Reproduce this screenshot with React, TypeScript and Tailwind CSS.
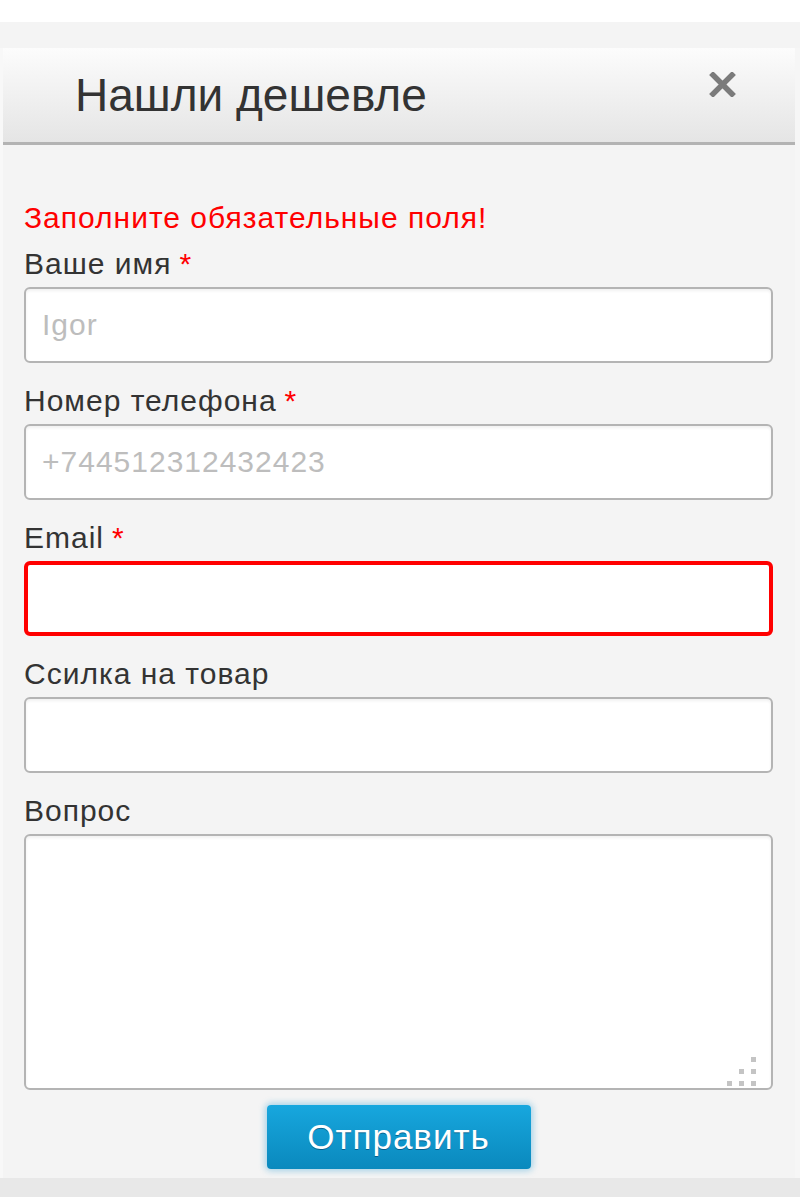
import React from 'react';

const font = "font-['Liberation_Sans',Arial,sans-serif]";

function Label({ text, required }: { text: string; required?: boolean }) {
  return (
    <div className="text-[30px] leading-[36px] tracking-[1px] text-[#333] mb-[5px]">
      {text}
      {required && <span className="text-[#ff0000] ml-[8px]">*</span>}
    </div>
  );
}

function Field({
  label,
  required,
  placeholder,
  error,
}: {
  label: string;
  required?: boolean;
  placeholder?: string;
  error?: boolean;
}) {
  return (
    <div className="mb-[20px]">
      <Label text={label} required={required} />
      <input
        placeholder={placeholder}
        className={
          error
            ? 'block w-full h-[75px] bg-white rounded-[6px] border-[4px] border-[#ff0000] px-[16px] text-[30px] outline-none'
            : 'block w-full h-[76px] bg-white rounded-[6px] border-2 border-[#b4b4b4] shadow-[inset_0_2px_3px_rgba(0,0,0,0.06)] px-[16px] text-[30px] tracking-[1px] text-[#333] placeholder:text-[#bdbdbd] outline-none'
        }
      />
    </div>
  );
}

export default function App() {
  return (
    <div className={`w-[800px] h-[1197px] bg-white flex flex-col overflow-hidden ${font}`}>
      <div className="h-[22px] bg-white" />
      <div className="flex-1 flex flex-col bg-[#f4f4f4]">
        <div className="h-[26px]" />
        <div className="flex flex-1">
          <div className="w-[3px] bg-[#f8f8f8]" />
          <div className="w-[792px] flex flex-col">
            {/* header */}
            <div className="h-[97px] flex items-start justify-between bg-gradient-to-b from-[#fcfcfc] to-[#e5e5e5] border-b-[3px] border-[#b3b3b3]">
              <h2 className="pl-[72px] pt-[20px] text-[46px] leading-[54px] text-[#333]">Нашли дешевле</h2>
              <button className="mt-[24px] mr-[59px] w-[27px] h-[25px]">
                <svg width="27" height="25" viewBox="0 0 27 25">
                  <path d="M4 3 L23 22 M23 3 L4 22" stroke="#7b7b7b" strokeWidth="5.5" strokeLinecap="square" />
                </svg>
              </button>
            </div>
            {/* body */}
            <div className="flex-1 flex flex-col pl-[21px] pr-[22px] pt-[55px]">
              <div className="text-[30px] leading-[36px] tracking-[1px] text-[#ff0000] mb-[10px]">
                Заполните обязательные поля!
              </div>
              <Field label="Ваше имя" required placeholder="Igor" />
              <Field label="Номер телефона" required placeholder="+744512312432423" />
              <Field label="Email" required error />
              <Field label="Ссилка на товар" />
              <div>
                <Label text="Вопрос" />
                <div className="relative">
                  <textarea className="block w-full h-[256px] bg-white rounded-[6px] border-2 border-[#b4b4b4] shadow-[inset_0_2px_3px_rgba(0,0,0,0.06)] resize-none outline-none" />
                  <div className="absolute right-[17px] bottom-[4px] grid grid-cols-3 gap-[7px]">
                    <span />
                    <span />
                    <span className="w-[5px] h-[5px] bg-[#c4c4c4]" />
                    <span />
                    <span className="w-[5px] h-[5px] bg-[#c4c4c4]" />
                    <span className="w-[5px] h-[5px] bg-[#c4c4c4]" />
                    <span className="w-[5px] h-[5px] bg-[#c4c4c4]" />
                    <span className="w-[5px] h-[5px] bg-[#c4c4c4]" />
                    <span className="w-[5px] h-[5px] bg-[#c4c4c4]" />
                  </div>
                </div>
              </div>
              <div className="flex justify-center mt-[15px]">
                <button className="w-[264px] h-[64px] rounded-[4px] bg-gradient-to-b from-[#17a7de] to-[#0a89bd] shadow-[0_0_6px_2px_rgba(23,150,210,0.35)] text-white text-[35px] tracking-[1px] [text-shadow:0_1px_0_rgba(0,60,100,0.6)]">
                  Отправить
                </button>
              </div>
            </div>
          </div>
          <div className="flex-1 bg-[#f6f6f6]" />
        </div>
        <div className="h-[19px] bg-[#e8e8e8]" />
      </div>
    </div>
  );
}
